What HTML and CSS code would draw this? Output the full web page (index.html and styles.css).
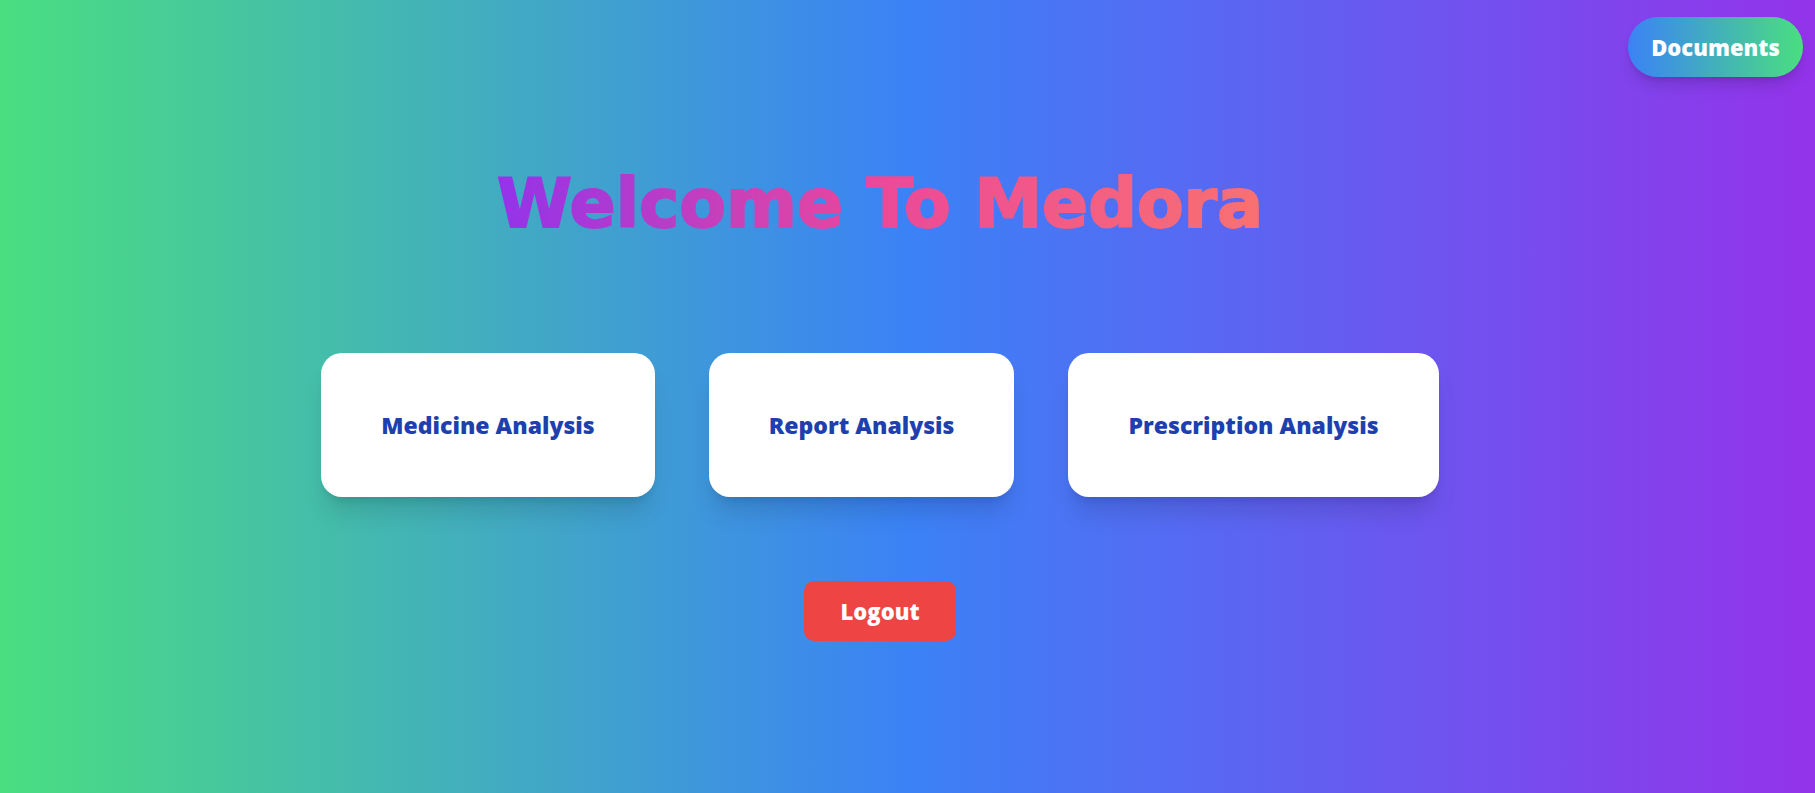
FILE: index.html
```html
<!DOCTYPE html>
<html lang="en">
<head>
<meta charset="utf-8">
<title>Medora</title>
<link rel="stylesheet" href="styles.css">
</head>
<body>
<div class="page">
  <button class="docs-btn">Documents</button>
  <main class="main">
    <h1 class="title">Welcome To Medora</h1>
    <div class="cards">
      <div class="card">Medicine Analysis</div>
      <div class="card">Report Analysis</div>
      <div class="card">Prescription Analysis</div>
    </div>
    <button class="logout-btn">Logout</button>
  </main>
</div>
</body>
</html>
```

FILE: styles.css
```css
* { box-sizing: border-box; }
html, body { margin: 0; padding: 0; }
body {
  font-family: "Open Sans", "Noto Sans", sans-serif;
}
.page {
  position: relative;
  min-height: 100vh;
  background: linear-gradient(to right, #4ade80, #3b82f6, #9333ea);
  overflow: hidden;
}
.docs-btn {
  position: absolute;
  top: 17px;
  right: 12px;
  width: 175px;
  height: 60px;
  border: none;
  border-radius: 999px;
  background: linear-gradient(to right, #3b82f6, #4ade80);
  color: #fff;
  font-family: "Open Sans", "Noto Sans", sans-serif;
  font-weight: 800;
  font-size: 22px;
  box-shadow: 0 10px 15px -3px rgba(0,0,0,0.15), 0 4px 6px -4px rgba(0,0,0,0.15);
  cursor: pointer;
}
.main {
  display: flex;
  flex-direction: column;
  align-items: center;
  padding: 164px 55px 0 0;
}
.title {
  margin: 0;
  font-family: "DejaVu Sans", sans-serif;
  font-weight: 700;
  font-size: 68px;
  line-height: 80px;
  background: linear-gradient(to right, #9333ea, #ec4899, #f87171);
  -webkit-background-clip: text;
  background-clip: text;
  color: transparent;
  -webkit-text-stroke: 2px transparent;
}
.cards {
  display: flex;
  gap: 54px;
  margin-top: 109px;
}
.card {
  height: 144px;
  padding: 0 60px;
  display: flex;
  align-items: center;
  justify-content: center;
  background: #fff;
  border-radius: 21px;
  color: #1e40af;
  font-weight: 800;
  font-size: 23px;
  box-shadow: 0 20px 25px -5px rgba(0,0,0,0.12), 0 8px 10px -6px rgba(0,0,0,0.12);
}
.logout-btn {
  margin-top: 84px;
  width: 152px;
  height: 60px;
  border: none;
  border-radius: 10px;
  background: #ef4444;
  color: #fff;
  font-family: "Open Sans", "Noto Sans", sans-serif;
  font-weight: 800;
  font-size: 22px;
  cursor: pointer;
}
```
